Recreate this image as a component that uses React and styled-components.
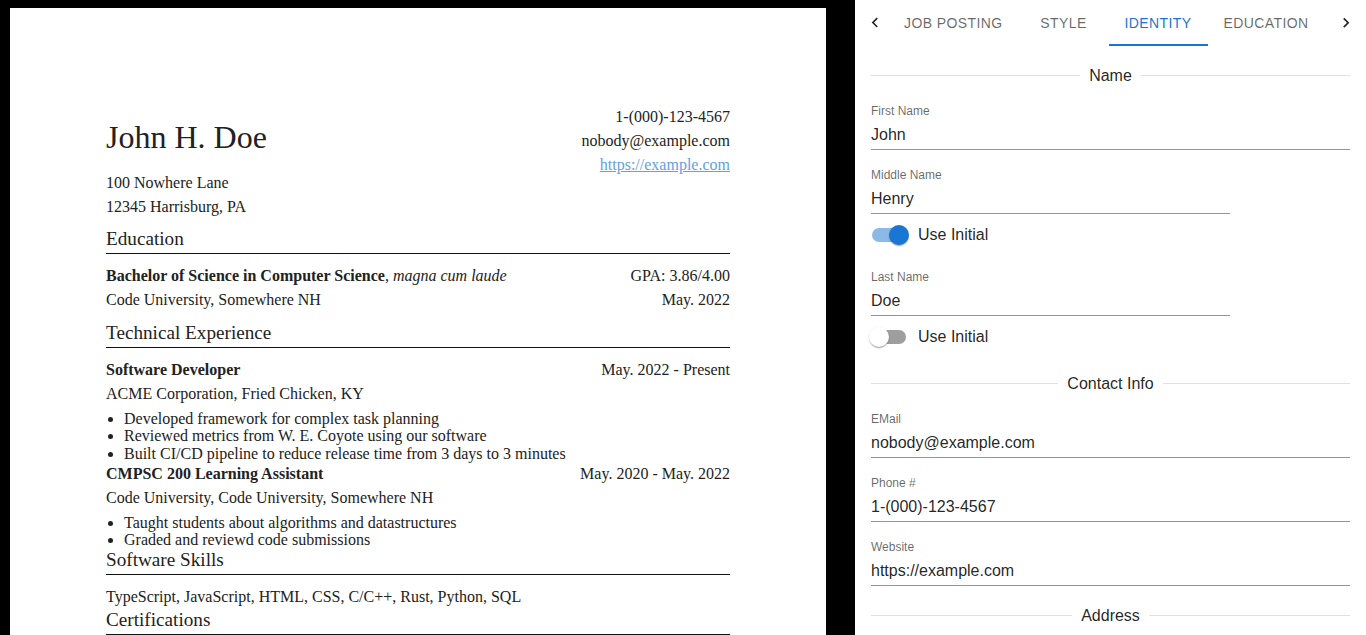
import React from 'react'
import styled, { createGlobalStyle } from 'styled-components'

const GlobalStyle = createGlobalStyle`
  html, body {
    margin: 0;
    padding: 0;
    background: #000;
    overflow: hidden;
  }
`

const Page = styled.div`
  display: flex;
  align-items: flex-start;
  height: 100vh;
`

const PaperWrap = styled.div`
  flex: none;
  padding: 8px 0 0 10px;
`

const Paper = styled.div`
  width: 816px;
  box-sizing: border-box;
  min-height: 1056px;
  background: #fff;
  padding: 97px 96px 0 96px;
  font-family: "Liberation Serif", "Times New Roman", serif;
  font-size: 16px;
  color: #222;
`

const Header = styled.div`
  display: flex;
  justify-content: space-between;
  align-items: flex-start;
`

const HeaderLeft = styled.div`
  display: flex;
  flex-direction: column;
`

const Name = styled.h1`
  margin: 13px 0 0;
  font-size: 32px;
  font-weight: normal;
  line-height: 38px;
`

const Lines = styled.div`
  margin-top: ${p => p.$top || 0}px;
  margin-bottom: ${p => p.$bottom || 0}px;
  line-height: 24px;
  text-align: ${p => (p.$right ? 'right' : 'left')};
`

const Link = styled.a`
  color: #64a0e6;
  text-decoration: underline;
`

const SectionTitle = styled.h2`
  margin: ${p => p.$top || 0}px 0 10px;
  font-size: 19.2px;
  font-weight: normal;
  line-height: 24px;
  padding-bottom: 2px;
  border-bottom: 1px solid #111;
`

const Entry = styled.div`
  margin-bottom: ${p => p.$bottom || 0}px;
`

const Row = styled.div`
  display: flex;
  justify-content: space-between;
  line-height: 24px;
`

const Bullets = styled.ul`
  margin: 4px 0 0;
  padding-left: 18px;
  line-height: 17.3px;
`

const Panel = styled.div`
  flex: none;
  width: 511px;
  height: 100vh;
  margin-left: 29px;
  background: #fff;
  overflow: hidden;
  font-family: "Liberation Sans", Arial, sans-serif;
  color: rgba(0, 0, 0, 0.87);
`

const TabBar = styled.div`
  display: flex;
  height: 46px;
`

const ScrollButton = styled.div`
  flex: none;
  width: 40px;
  display: flex;
  align-items: center;
  justify-content: center;
  color: rgba(0, 0, 0, 0.85);
`

const TabScroller = styled.div`
  flex: 1;
  overflow: hidden;
  display: flex;
`

const Tab = styled.div`
  flex: none;
  position: relative;
  min-width: 90px;
  box-sizing: border-box;
  padding: 0 16px;
  display: flex;
  align-items: center;
  justify-content: center;
  font-size: 14px;
  font-weight: 500;
  letter-spacing: 0.4px;
  text-transform: uppercase;
  color: ${p => (p.$active ? '#1976d2' : 'rgba(0, 0, 0, 0.6)')};
  &:first-child {
    margin-left: -7px;
  }
  &::after {
    content: '';
    display: ${p => (p.$active ? 'block' : 'none')};
    position: absolute;
    left: 0;
    right: 0;
    bottom: 0;
    height: 2px;
    background: #1976d2;
  }
`

const Form = styled.div`
  padding: 0 16px;
  display: flex;
  flex-direction: column;
`

const Divider = styled.div`
  display: flex;
  align-items: center;
  margin-top: ${p => p.$top || 17}px;
  font-size: 16px;
  line-height: 23px;
  &::before,
  &::after {
    content: '';
    flex: 1;
    border-top: 1px solid rgba(0, 0, 0, 0.12);
  }
  span {
    padding: 0 9.6px;
  }
`

const Field = styled.div`
  margin-top: ${p => p.$top || 17}px;
  width: ${p => (p.$narrow ? '75%' : '100%')};
`

const Label = styled.label`
  display: block;
  font-size: 12px;
  line-height: 16px;
  color: rgba(0, 0, 0, 0.6);
`

const InputBox = styled.div`
  padding: 4px 0 3px;
  border-bottom: 1px solid rgba(0, 0, 0, 0.42);
  input {
    display: block;
    width: 100%;
    border: none;
    outline: none;
    padding: 0;
    margin: 0;
    background: transparent;
    font: inherit;
    font-size: 16px;
    line-height: 23px;
    height: 23px;
    color: rgba(0, 0, 0, 0.87);
  }
`

const SwitchLabel = styled.label`
  display: flex;
  align-items: center;
  margin: 2px 0 -2px -11px;
  font-size: 16px;
  line-height: 24px;
`

const SwitchRoot = styled.span`
  position: relative;
  width: 58px;
  height: 38px;
  box-sizing: border-box;
  padding: 12px;
  flex: none;
`

const Track = styled.span`
  display: block;
  width: 34px;
  height: 14px;
  border-radius: 7px;
  background: ${p => (p.$on ? '#1976d2' : '#000')};
  opacity: ${p => (p.$on ? 0.5 : 0.38)};
`

const Thumb = styled.span`
  position: absolute;
  top: 9px;
  left: ${p => (p.$on ? 29 : 9)}px;
  width: 20px;
  height: 20px;
  border-radius: 50%;
  background: ${p => (p.$on ? '#1976d2' : '#fff')};
  box-shadow: 0px 2px 1px -1px rgba(0, 0, 0, 0.2), 0px 1px 1px 0px rgba(0, 0, 0, 0.14),
    0px 1px 3px 0px rgba(0, 0, 0, 0.12);
`

const Chevron = ({ dir }) => (
  <svg width="20" height="20" viewBox="0 0 24 24" fill="currentColor">
    {dir === 'left' ? (
      <path d="M15.41 16.09l-4.58-4.59 4.58-4.59L14 5.5l-6 6 6 6z" />
    ) : (
      <path d="M8.59 16.34l4.58-4.59-4.58-4.59L10 5.75l6 6-6 6z" />
    )}
  </svg>
)

const TextField = ({ label, value, narrow, top }) => (
  <Field $narrow={narrow} $top={top}>
    <Label>{label}</Label>
    <InputBox>
      <input readOnly value={value} />
    </InputBox>
  </Field>
)

const Toggle = ({ on, label }) => (
  <SwitchLabel>
    <SwitchRoot>
      <Track $on={on} />
      <Thumb $on={on} />
    </SwitchRoot>
    {label}
  </SwitchLabel>
)

const tabs = ['Job Posting', 'Style', 'Identity', 'Education']

export default function App() {
  return (
    <>
      <GlobalStyle />
      <Page>
        <PaperWrap>
          <Paper>
            <Header>
              <HeaderLeft>
                <Name>John H. Doe</Name>
                <Lines $top={15}>
                  <div>100 Nowhere Lane</div>
                  <div>12345 Harrisburg, PA</div>
                </Lines>
              </HeaderLeft>
              <Lines $right>
                <div>1-(000)-123-4567</div>
                <div>nobody@example.com</div>
                <div>
                  <Link href="#">https://example.com</Link>
                </div>
              </Lines>
            </Header>

            <SectionTitle $top={8}>Education</SectionTitle>
            <Entry $bottom={9}>
              <Row>
                <span>
                  <b>Bachelor of Science in Computer Science</b>, <i>magna cum laude</i>
                </span>
                <span>GPA: 3.86/4.00</span>
              </Row>
              <Row>
                <span>Code University, Somewhere NH</span>
                <span>May. 2022</span>
              </Row>
            </Entry>

            <SectionTitle>Technical Experience</SectionTitle>
            <Entry>
              <Row>
                <b>Software Developer</b>
                <span>May. 2022 - Present</span>
              </Row>
              <Row>ACME Corporation, Fried Chicken, KY</Row>
              <Bullets>
                <li>Developed framework for complex task planning</li>
                <li>Reviewed metrics from W. E. Coyote using our software</li>
                <li>Built CI/CD pipeline to reduce release time from 3 days to 3 minutes</li>
              </Bullets>
            </Entry>
            <Entry>
              <Row>
                <b>CMPSC 200 Learning Assistant</b>
                <span>May. 2020 - May. 2022</span>
              </Row>
              <Row>Code University, Code University, Somewhere NH</Row>
              <Bullets>
                <li>Taught students about algorithms and datastructures</li>
                <li>Graded and reviewd code submissions</li>
              </Bullets>
            </Entry>

            <SectionTitle>Software Skills</SectionTitle>
            <Lines $bottom={-1}>TypeScript, JavaScript, HTML, CSS, C/C++, Rust, Python, SQL</Lines>

            <SectionTitle>Certifications</SectionTitle>
          </Paper>
        </PaperWrap>

        <Panel>
          <TabBar>
            <ScrollButton>
              <Chevron dir="left" />
            </ScrollButton>
            <TabScroller>
              {tabs.map(t => (
                <Tab key={t} $active={t === 'Identity'}>
                  {t}
                </Tab>
              ))}
            </TabScroller>
            <ScrollButton>
              <Chevron dir="right" />
            </ScrollButton>
          </TabBar>

          <Form>
            <Divider $top={18}>
              <span>Name</span>
            </Divider>
            <TextField label="First Name" value="John" top={16} />
            <TextField label="Middle Name" value="Henry" narrow />
            <Toggle on label="Use Initial" />
            <TextField label="Last Name" value="Doe" narrow />
            <Toggle label="Use Initial" />

            <Divider $top={18}>
              <span>Contact Info</span>
            </Divider>
            <TextField label="EMail" value="nobody@example.com" top={16} />
            <TextField label="Phone #" value="1-(000)-123-4567" />
            <TextField label="Website" value="https://example.com" />

            <Divider $top={18}>
              <span>Address</span>
            </Divider>
          </Form>
        </Panel>
      </Page>
    </>
  )
}
